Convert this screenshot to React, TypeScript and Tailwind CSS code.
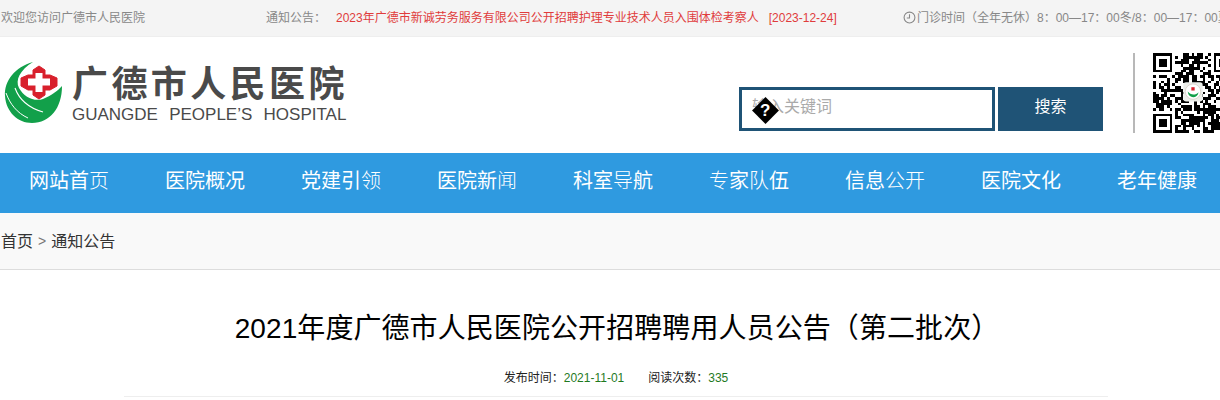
import React from "react";

const navItems = ["网站首页", "医院概况", "党建引领", "医院新闻", "科室导航", "专家队伍", "信息公开", "医院文化", "老年健康"];

// chars that render in the thinner fallback face in the nav
const thinChars = "页领闻导专队公开";

const Emblem = () => (
  <svg viewBox="0 0 70 80" className="w-[70px] h-[80px] shrink-0">
    <path
      d="M33 12C15 17 4 31 5 46C6 62 18 73 32 73C50 73 62 58 62 36C58 41 50 46 43 49C34 52 24 47 19 38C15 30 20 20 33 12Z"
      fill="#12a04a"
    />
    <path d="M6 43C10 54 17 63 28 68" stroke="#fff" strokeWidth="1" fill="none" />
    <path d="M15 38C19 49 29 58 43 62" stroke="#fff" strokeWidth="1.1" fill="none" />
    <path
      d="M33 20L39 16L45 20V25H50L57 28V36L50 40H45V45L39 49L33 45V40H28L21 36V28L28 25H33Z"
      fill="#d8202c"
      stroke="#d8202c"
      strokeLinejoin="round"
    />
    <path d="M35.5 23H42.5V28.5H50V35.5H42.5V42H35.5V35.5H28V28.5H35.5Z" fill="#fff" />
  </svg>
);

// finder squares plus seeded noise, close enough to a real code at this size
const QrCode = () => {
  const n = 29;
  const cells: React.ReactNode[] = [];
  let seed = 7;
  const next = () => {
    seed = (seed * 16807) % 2147483647;
    return seed % 100;
  };
  const inFinder = (x: number, y: number) =>
    (x < 8 && y < 8) || (x >= n - 8 && y < 8) || (x < 8 && y >= n - 8);
  for (let y = 0; y < n; y++) {
    for (let x = 0; x < n; x++) {
      const v = next();
      if (inFinder(x, y)) continue;
      if (v < 52) cells.push(<rect key={`${x}-${y}`} x={x} y={y} width="1" height="1" fill="#000" />);
    }
  }
  const finder = (x: number, y: number) => (
    <g key={`f${x}-${y}`}>
      <rect x={x} y={y} width="7" height="7" fill="#000" />
      <rect x={x + 1} y={y + 1} width="5" height="5" fill="#fff" />
      <rect x={x + 2} y={y + 2} width="3" height="3" fill="#000" />
    </g>
  );
  return (
    <svg viewBox="0 0 29 29" shapeRendering="crispEdges" className="w-[80px] h-[80px] shrink-0">
      {cells}
      {finder(0, 0)}
      {finder(22, 0)}
      {finder(0, 22)}
      <g shapeRendering="auto">
        <rect x="11" y="10.6" width="7" height="7" rx="1" fill="#eceeea" />
        <circle cx="14.5" cy="14" r="2.8" fill="#fff" stroke="#d8d0c8" strokeWidth="0.3" />
        <path d="M12.6 14C12.8 16.7 16.2 16.7 16.5 14.2C15.6 15.4 13.6 15.4 12.6 14Z" fill="#12a04a" />
        <rect x="13.9" y="12.4" width="1.2" height="1.2" fill="#d8202c" />
      </g>
    </svg>
  );
};

export default function App() {
  return (
    <div className="w-[1220px] h-[400px] overflow-hidden bg-white font-['Liberation_Sans','Noto_Sans_CJK_SC',sans-serif]">
      {/* top strip */}
      <div className="h-[37px] bg-[#f4f4f4] border-b border-[#eeeeee] flex items-center text-[12px] text-[#888888] whitespace-nowrap">
        <span className="pl-[1px] w-[266px] shrink-0">欢迎您访问广德市人民医院</span>
        <span className="w-[70px] shrink-0">通知公告：</span>
        <span className="text-[#e03c3c] w-[567px] shrink-0">
          2023年广德市新诚劳务服务有限公司公开招聘护理专业技术人员入围体检考察人
          <span className="ml-[10px]">[2023-12-24]</span>
        </span>
        <svg viewBox="0 0 24 24" className="w-[13px] h-[13px] shrink-0 mr-[1px] mb-[2px]" fill="none" stroke="#888888" strokeWidth="2">
          <circle cx="12" cy="12" r="10" />
          <path d="M12 6V13H7" />
        </svg>
        <span className="shrink-0">门诊时间（全年无休）8：00—17：00冬/8：00—17：00夏</span>
      </div>

      {/* logo, search, qr */}
      <div className="h-[116px] flex items-start">
        <div className="w-[739px] shrink-0 flex items-start pt-[13px]">
          <Emblem />
          <div className="ml-[2px] flex flex-col text-[#4a4a4a] whitespace-nowrap">
            <span className="text-[36px] leading-[42px] h-[42px] mt-[14px] font-bold tracking-[3.4px]">广德市人民医院</span>
            <span className="text-[17px] leading-[18px] mt-[0px] [word-spacing:6.5px]">GUANGDE PEOPLE’S HOSPITAL</span>
          </div>
        </div>
        <div className="relative mt-[50px] w-[256px] h-[44px] shrink-0 border-[3px] border-[#1f5376] bg-white flex items-center pl-[10px] pb-[4px] text-[16px] text-[#aaaaaa]">
          输入关键词
          <span className="absolute left-[10px] top-[7px] w-[26px] h-[26px] flex items-center justify-center">
            <span className="w-[19px] h-[19px] rotate-45 bg-black flex items-center justify-center">
              <span className="-rotate-45 text-white text-[17px] leading-none font-bold">?</span>
            </span>
          </span>
        </div>
        <div className="mt-[50px] ml-[3px] w-[105px] h-[44px] shrink-0 bg-[#1f5376] text-white text-[16px] pb-[4px] flex items-center justify-center">
          搜索
        </div>
        <div className="mt-[16px] ml-[30px] w-[2px] h-[80px] shrink-0 bg-[#b8b8b8]" />
        <div className="mt-[16px] ml-[18px] shrink-0">
          <QrCode />
        </div>
      </div>

      {/* main nav */}
      <div className="h-[60px] bg-[#2f9ae0] flex items-center pl-[1px] pb-[4px] text-white text-[20px] whitespace-nowrap">
        {navItems.map((item) => (
          <span key={item} className="w-[136px] shrink-0 text-center">
            {item.split("").map((ch, i) => (
              <span key={i} className={thinChars.includes(ch) ? "font-light" : ""}>
                {ch}
              </span>
            ))}
          </span>
        ))}
      </div>

      {/* breadcrumb */}
      <div className="h-[57px] bg-[#f9f9f9] border-b border-[#dddddd] flex items-center pl-[1px] pt-[1px] text-[16px] text-[#333333]">
        首页
        <span className="mx-[5px] text-[#777777] text-[14px]">&gt;</span>
        通知公告
      </div>

      {/* article head */}
      <div className="flex flex-col items-center pl-[12px]">
        <h1 className="mt-[40px] ml-[2px] text-[28px] leading-[38px] tracking-[0.08px] text-black whitespace-nowrap">
          2021年度广德市人民医院公开招聘聘用人员公告（第二批次）
        </h1>
        <div className="mt-[21px] h-[18px] flex items-center text-[12px] text-[#222222]">
          <span>发布时间：</span>
          <span className="text-[#1f7a1f]">2021-11-01</span>
          <span className="ml-[24px]">阅读次数：</span>
          <span className="text-[#1f7a1f]">335</span>
        </div>
        <div className="mt-[9px] w-[984px] border-b border-[#eeeeee]" />
      </div>
    </div>
  );
}
